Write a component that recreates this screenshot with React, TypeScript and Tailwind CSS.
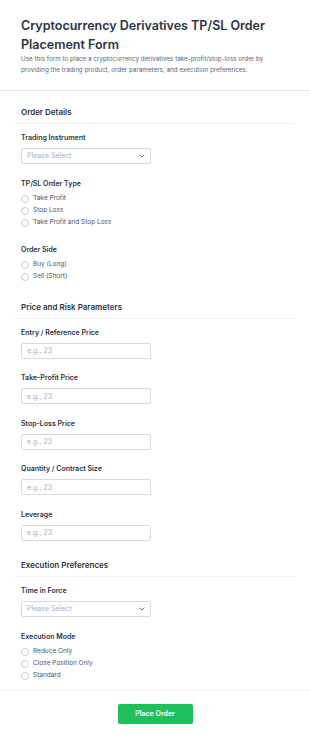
import React from 'react';

const font = { fontFamily: 'Inter, "Noto Sans", sans-serif' };

const Field = ({ label, children }: { label: string; children: React.ReactNode }) => (
  <div className="flex flex-col">
    <label className="text-[7px] leading-[10px] font-semibold text-[#2c3345]">{label}</label>
    <div className="mt-[5px]">{children}</div>
  </div>
);

const TextInput = () => (
  <input
    type="text"
    placeholder="e.g., 23"
    className="block w-[130px] h-[16px] rounded-[2px] border border-[#d6dae2] px-[5px] text-[7px] text-[#2c3345] placeholder:text-[#a9afbd] outline-none"
  />
);

const SelectBox = () => (
  <div className="w-[130px] h-[16px] rounded-[2px] border border-[#d6dae2] px-[5px] flex items-center justify-between">
    <span className="text-[7px] text-[#a9afbd]">Please Select</span>
    <svg width="6" height="4" viewBox="0 0 6 4">
      <path d="M1 1l2 2 2-2" fill="none" stroke="#57647e" strokeWidth="0.9" strokeLinecap="round" strokeLinejoin="round" />
    </svg>
  </div>
);

const RadioGroup = ({ label, options }: { label: string; options: string[] }) => (
  <div className="flex flex-col pb-[1px]">
    <span className="text-[7px] leading-[10px] font-semibold text-[#2c3345]">{label}</span>
    <div className="mt-[4px] flex flex-col">
      {options.map((o) => (
        <div key={o} className="h-[12.3px] flex items-center gap-[4px]">
          <span className="w-[8px] h-[8px] rounded-full border border-[#c9ced8] bg-white" />
          <span className="text-[6.5px] text-[#4a5369]">{o}</span>
        </div>
      ))}
    </div>
  </div>
);

const Section = ({ title, children }: { title: string; children: React.ReactNode }) => (
  <div className="px-[15px]">
    <div className="border-b border-[#f1f2f5] pb-[5px]">
      <h2 className="px-[6px] text-[8px] leading-[12px] font-semibold text-[#2c3345]">{title}</h2>
    </div>
    <div className="px-[6px] pt-[9px] flex flex-col gap-[14.4px]">{children}</div>
  </div>
);

export default function App() {
  return (
    <div className="w-[310px] min-h-[740px] bg-white" style={font}>
      <div className="px-[21px] pt-[17px] pb-[14px] border-b border-[#e7e9ee]">
        <h1 className="text-[12.5px] leading-[18.6px] font-semibold text-[#2c3345]">
          Cryptocurrency Derivatives TP/SL Order Placement Form
        </h1>
        <p className="text-[6.3px] leading-[11px] text-[#57647e]">
          Use this form to place a cryptocurrency derivatives take-profit/stop-loss order by providing the trading product, order parameters, and execution preferences.
        </p>
      </div>

      <div className="pt-[15px]">
        <Section title="Order Details">
          <Field label="Trading Instrument">
            <SelectBox />
          </Field>
          <RadioGroup label="TP/SL Order Type" options={['Take Profit', 'Stop Loss', 'Take Profit and Stop Loss']} />
          <RadioGroup label="Order Side" options={['Buy (Long)', 'Sell (Short)']} />
        </Section>
      </div>

      <div className="pt-[16.5px]">
        <Section title="Price and Risk Parameters">
          <Field label="Entry / Reference Price">
            <TextInput />
          </Field>
          <Field label="Take-Profit Price">
            <TextInput />
          </Field>
          <Field label="Stop-Loss Price">
            <TextInput />
          </Field>
          <Field label="Quantity / Contract Size">
            <TextInput />
          </Field>
          <Field label="Leverage">
            <TextInput />
          </Field>
        </Section>
      </div>

      <div className="pt-[18.6px] pb-[7px] border-b border-[#f1f2f5]">
        <Section title="Execution Preferences">
          <Field label="Time in Force">
            <SelectBox />
          </Field>
          <RadioGroup label="Execution Mode" options={['Reduce Only', 'Close Position Only', 'Standard']} />
        </Section>
      </div>

      <div className="flex justify-center pt-[12.5px]">
        <button
          type="button"
          className="w-[75px] h-[20px] rounded-[2px] bg-[#1fbf5c] text-white text-[7px] font-semibold"
        >
          Place Order
        </button>
      </div>
    </div>
  );
}
